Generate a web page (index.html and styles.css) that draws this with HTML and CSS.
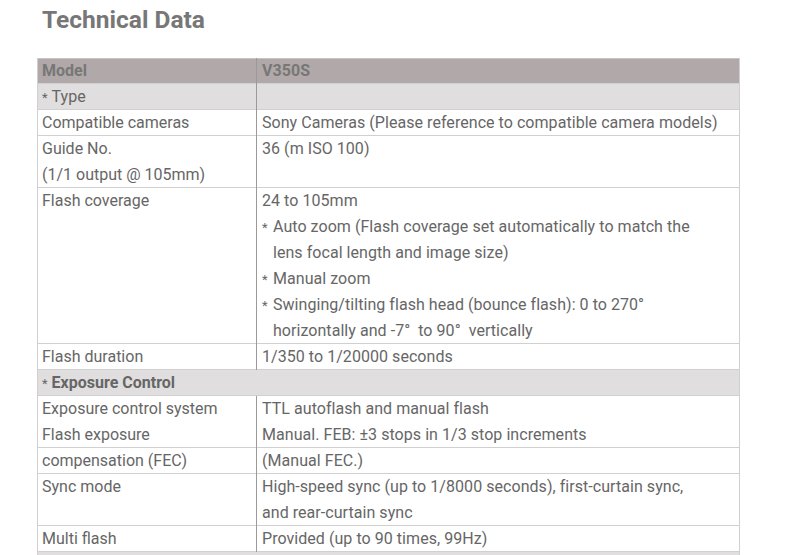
FILE: index.html
```html
<!DOCTYPE html>
<html lang="en">
<head>
<meta charset="utf-8">
<title>Technical Data</title>
<link rel="stylesheet" href="styles.css">
</head>
<body>
<main class="page">
  <h1 class="title">Technical Data</h1>
  <table class="spec">
    <colgroup><col class="col-label"><col class="col-value"></colgroup>
    <tr class="head"><td>Model</td><td class="val">V350S</td></tr>
    <tr class="sub"><td><span class="ast">*</span>Type</td><td class="val"></td></tr>
    <tr><td>Compatible cameras</td><td class="val">Sony Cameras (Please reference to compatible camera models)</td></tr>
    <tr><td>Guide No.<br>(1/1 output @ 105mm)</td><td class="val">36 (m ISO 100)</td></tr>
    <tr><td>Flash coverage</td><td class="val">
      <div>24 to 105mm</div>
      <div class="item"><span class="mark">*</span>Auto zoom (Flash coverage set automatically to match the<br>lens focal length and image size)</div>
      <div class="item"><span class="mark">*</span>Manual zoom</div>
      <div class="item"><span class="mark">*</span>Swinging/tilting flash head (bounce flash): 0 to 270°<br>horizontally and -7°&nbsp; to 90°&nbsp; vertically</div>
    </td></tr>
    <tr><td>Flash duration</td><td class="val">1/350 to 1/20000 seconds</td></tr>
    <tr class="section"><td colspan="2"><span class="ast">*</span>Exposure Control</td></tr>
    <tr><td>Exposure control system<br>Flash exposure</td><td class="val">TTL autoflash and manual flash<br>Manual. FEB: ±3 stops in 1/3 stop increments</td></tr>
    <tr><td>compensation (FEC)</td><td class="val">(Manual FEC.)</td></tr>
    <tr><td>Sync mode</td><td class="val">High-speed sync (up to 1/8000 seconds), first-curtain sync,<br>and rear-curtain sync</td></tr>
    <tr><td>Multi flash</td><td class="val">Provided (up to 90 times, 99Hz)</td></tr>
    <tr class="section tail"><td colspan="2"></td></tr>
  </table>
</main>
</body>
</html>
```

FILE: styles.css
```css
html, body {
  margin: 0;
  padding: 0;
  background: #ffffff;
}

.page {
  padding: 0 0 0 37px;
  font-family: Roboto, "Liberation Sans", sans-serif;
  color: #666666;
}

.title {
  margin: 0;
  padding: 5px 0 0 5px;
  height: 58px;
  box-sizing: border-box;
  font-size: 24.5px;
  font-weight: 700;
  line-height: 30px;
  color: #777777;
}

.spec {
  width: 703px;
  border-collapse: separate;
  border-spacing: 0;
  border-left: 1px solid #d0d0d0;
  border-right: 1px solid #d0d0d0;
  font-size: 16px;
  line-height: 26px;
  color: #666666;
}

.col-label { width: 218px; }

.spec td {
  border: 0;
  padding: 0 4px;
  vertical-align: top;
  white-space: nowrap;
  box-shadow: inset 0 -1px 0 #d0d0d0;
}

.spec td.val {
  padding-left: 6px;
  letter-spacing: 0.05px;
  box-shadow: inset 1px 0 0 #9a9a9a, inset 0 -1px 0 #d0d0d0;
}

.head td {
  background: #b1a9a9;
  font-weight: 700;
  color: #777777;
  box-shadow: inset 0 1px 0 #c8c4c4, inset 0 -1px 0 #d0d0d0;
}

.head td.val {
  box-shadow: inset 1px 0 0 #9a9a9a, inset 0 1px 0 #c8c4c4, inset 0 -1px 0 #d0d0d0;
}

.sub td {
  background: #e0dede;
}

.section td {
  background: #e0dede;
  font-weight: 700;
}

.tail td {
  height: 26px;
}

.ast {
  font-weight: 400;
  font-size: 13px;
  line-height: 1;
  margin-right: 4px;
}

.item {
  padding-left: 11px;
  text-indent: -11px;
}

.mark {
  display: inline-block;
  width: 11px;
  text-indent: 0;
  font-size: 13px;
  line-height: 1;
}
```
